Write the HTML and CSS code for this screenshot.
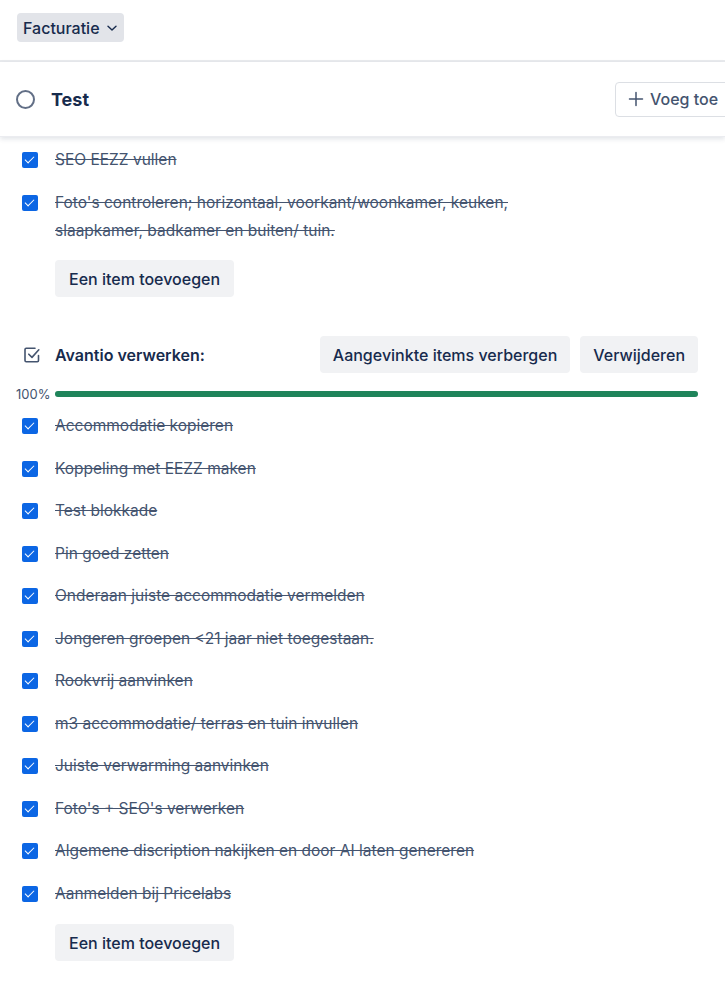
FILE: index.html
```html
<!DOCTYPE html>
<html lang="nl">
<head>
    <meta charset="UTF-8">
    <meta name="viewport" content="width=device-width, initial-scale=1.0">
    <title>Test - Facturatie</title>
    <link rel="stylesheet" href="styles.css">
</head>
<body>

<header class="topbar">
    <button class="board-btn">Facturatie
        <svg width="12" height="12" viewBox="0 0 12 12"><path d="M2 4.2 6 8l4-3.8" fill="none" stroke="currentColor" stroke-width="1.4" stroke-linecap="round" stroke-linejoin="round"/></svg>
    </button>
</header>

<section class="card-head">
    <span class="status-circle"></span>
    <h1 class="card-title">Test</h1>
    <button class="add-btn">
        <svg width="16" height="16" viewBox="0 0 16 16"><path d="M8 1.5v13M1.5 8h13" stroke="currentColor" stroke-width="1.5" stroke-linecap="round"/></svg>
        Voeg toe
    </button>
</section>

<main class="checklists">
    <ul class="items">
        <li class="item done"><span class="check"></span><span class="label">SEO EEZZ vullen</span></li>
        <li class="item done"><span class="check"></span><span class="label">Foto's controleren; horizontaal, voorkant/woonkamer, keuken, slaapkamer, badkamer en buiten/ tuin.</span></li>
    </ul>
    <button class="soft-btn add-item">Een item toevoegen</button>

    <div class="checklist">
        <div class="list-head">
            <svg class="list-icon" width="18" height="18" viewBox="0 0 18 18">
                <path d="M15.5 9.5v5a1.2 1.2 0 0 1-1.2 1.2H3.2A1.2 1.2 0 0 1 2 14.5V3.5a1.2 1.2 0 0 1 1.2-1.2h8.8" fill="none" stroke="currentColor" stroke-width="1.6" stroke-linecap="round"/>
                <path d="M5.8 8.2 9 11.4 15.8 3.8" fill="none" stroke="currentColor" stroke-width="1.6" stroke-linecap="round" stroke-linejoin="round"/>
            </svg>
            <h2 class="list-title">Avantio verwerken:</h2>
            <div class="list-actions">
                <button class="soft-btn">Aangevinkte items verbergen</button>
                <button class="soft-btn">Verwijderen</button>
            </div>
        </div>

        <div class="progress">
            <span class="pct">100%</span>
            <div class="track"><div class="fill" style="width: 100%"></div></div>
        </div>

        <ul class="items">
            <li class="item done"><span class="check"></span><span class="label">Accommodatie kopieren</span></li>
            <li class="item done"><span class="check"></span><span class="label">Koppeling met EEZZ maken</span></li>
            <li class="item done"><span class="check"></span><span class="label">Test blokkade</span></li>
            <li class="item done"><span class="check"></span><span class="label">Pin goed zetten</span></li>
            <li class="item done"><span class="check"></span><span class="label">Onderaan juiste accommodatie vermelden</span></li>
            <li class="item done"><span class="check"></span><span class="label">Jongeren groepen &lt;21 jaar niet toegestaan.</span></li>
            <li class="item done"><span class="check"></span><span class="label">Rookvrij aanvinken</span></li>
            <li class="item done"><span class="check"></span><span class="label">m3 accommodatie/ terras en tuin invullen</span></li>
            <li class="item done"><span class="check"></span><span class="label">Juiste verwarming aanvinken</span></li>
            <li class="item done"><span class="check"></span><span class="label">Foto's + SEO's verwerken</span></li>
            <li class="item done"><span class="check"></span><span class="label">Algemene discription nakijken en door AI laten genereren</span></li>
            <li class="item done"><span class="check"></span><span class="label">Aanmelden bij Pricelabs</span></li>
        </ul>
        <button class="soft-btn add-item last">Een item toevoegen</button>
    </div>
</main>

</body>
</html>
```

FILE: styles.css
```css
* {
    box-sizing: border-box;
}

body {
    margin: 0;
    font-family: Inter, "Noto Sans", sans-serif;
    color: #172b4d;
    background-color: #fff;
    overflow-x: hidden;
    width: 725px;
}

button {
    font-family: inherit;
    cursor: pointer;
}

/* top bar with board selector */
.topbar {
    height: 62px;
    padding: 13px 17px 0;
    border-bottom: 2px solid #e9ebee;
}

.board-btn {
    display: inline-flex;
    align-items: center;
    gap: 6px;
    height: 29px;
    padding: 0 6px;
    border: none;
    border-radius: 4px;
    background-color: #e2e4e9;
    color: #172b4d;
    font-size: 16px;
    font-weight: 500;
}

/* card header */
.card-head {
    position: relative;
    z-index: 1;
    display: flex;
    align-items: center;
    height: 75px;
    padding-left: 16px;
    background-color: #fff;
    box-shadow: 0 2px 5px rgba(9, 30, 66, 0.12);
    border-bottom: 1px solid #ebecf0;
}

.status-circle {
    width: 19px;
    height: 19px;
    border: 2px solid #626f86;
    border-radius: 50%;
    flex-shrink: 0;
}

.card-title {
    margin: 0 0 0 16px;
    font-size: 18px;
    font-weight: 700;
    flex: 1;
}

.add-btn {
    display: flex;
    align-items: center;
    gap: 6px;
    flex-shrink: 0;
    width: 130px;
    height: 35px;
    margin-right: -20px;
    padding: 0 12px;
    background: #fff;
    border: 1px solid #dcdfe4;
    border-radius: 4px;
    color: #44546f;
    font-size: 16px;
    font-weight: 500;
}

/* checklists */
.checklists {
    padding: 2px 27px 40px 0;
}

.items {
    list-style: none;
    margin: 0;
    padding: 0;
}

.item {
    display: flex;
    align-items: flex-start;
    padding: 7px 0 7.5px 22px;
    font-size: 15.5px;
    line-height: 28px;
}

.label {
    max-width: 480px;
}

.check {
    position: relative;
    flex-shrink: 0;
    width: 16px;
    height: 16px;
    margin-top: 6px;
    margin-right: 17px;
    border-radius: 2px;
    background-color: #0c66e4;
}

.check::after {
    content: "";
    position: absolute;
    left: 5px;
    top: 2px;
    width: 4px;
    height: 8px;
    border: solid #fff;
    border-width: 0 1.8px 1.8px 0;
    transform: rotate(45deg);
}

.item.done .label {
    color: #44546f;
    text-decoration: line-through;
}

.soft-btn {
    height: 37px;
    padding: 0 13px;
    border: none;
    border-radius: 4px;
    background-color: #f1f2f4;
    color: #172b4d;
    font-size: 16px;
    font-weight: 500;
}

.add-item {
    margin: 8px 0 0 55px;
    padding: 0 14px;
}

.add-item.last {
    margin-top: 9px;
}

.checklist {
    margin-top: 39px;
}

.list-head {
    display: flex;
    align-items: center;
    padding-left: 23px;
}

.list-icon {
    color: #44546f;
    flex-shrink: 0;
}

.list-title {
    margin: 0 0 0 14px;
    flex: 1;
    font-size: 16px;
    font-weight: 600;
}

.list-actions {
    display: flex;
    gap: 10px;
}

.progress {
    display: flex;
    align-items: center;
    height: 22px;
    padding-left: 16px;
    margin-top: 10px;
}

.pct {
    width: 39px;
    font-size: 13px;
    color: #44546f;
}

.track {
    flex: 1;
    height: 6px;
    border-radius: 3px;
    background-color: #dcdfe4;
}

.fill {
    height: 100%;
    border-radius: 3px;
    background-color: #1f845a;
}
```
